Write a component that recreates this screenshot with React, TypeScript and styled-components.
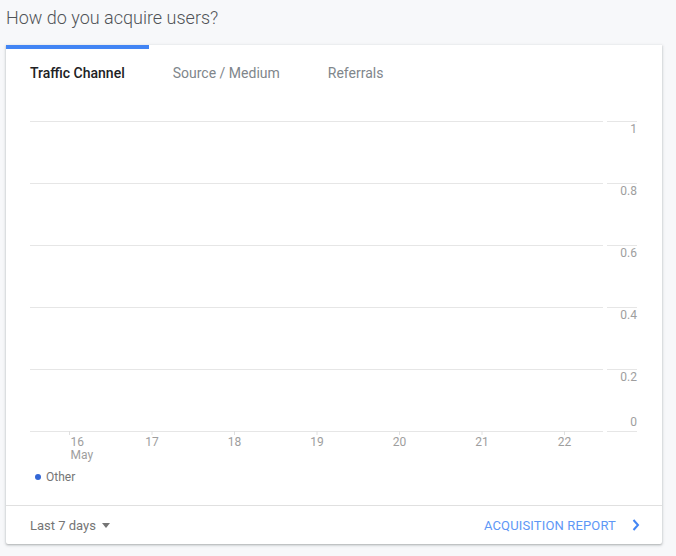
import React from "react";
import styled, { createGlobalStyle } from "styled-components";

const GlobalStyle = createGlobalStyle`
  html, body { margin: 0; padding: 0; background: #f7f8fa; }
  body { font-family: Roboto, "Noto Sans", Arial, sans-serif; }
  * { box-sizing: border-box; }
`;

const Page = styled.div`
  width: 676px;
  height: 556px;
  background: #f7f8fa;
  display: flex;
  flex-direction: column;
`;

const Title = styled.h2`
  margin: 0;
  height: 45px;
  padding: 7px 0 0 6px;
  font-size: 18px;
  line-height: 21px;
  font-weight: 300;
  color: #4f5357;
`;

const Card = styled.section`
  margin-left: 6px;
  width: 656px;
  height: 499px;
  background: #fff;
  border-radius: 0 0 2px 2px;
  box-shadow: 0 1px 2px rgba(60, 64, 67, 0.3), 0 1px 3px 1px rgba(60, 64, 67, 0.1);
  display: flex;
  flex-direction: column;
`;

const TabBar = styled.div`
  display: flex;
  height: 56px;
`;

const Tab = styled.div<{ $active?: boolean }>`
  display: flex;
  align-items: center;
  padding: 0 24px 4px;
  font-size: 14px;
  font-weight: ${(p) => (p.$active ? 500 : 400)};
  color: ${(p) => (p.$active ? "#202124" : "#80868b")};
  border-top: 4px solid ${(p) => (p.$active ? "#4285f4" : "transparent")};
  white-space: nowrap;
`;

const Chart = styled.svg`
  display: block;
  width: 656px;
  height: 364px;
  font-family: Roboto, Arial, sans-serif;
`;

const Legend = styled.div`
  height: 24px;
  display: flex;
  align-items: center;
  padding-left: 29px;
  gap: 5px;
  font-size: 12px;
  color: #757575;
`;

const Dot = styled.span`
  width: 6px;
  height: 6px;
  border-radius: 50%;
  background: #3367d6;
`;

const Spacer = styled.div`
  flex: 1;
`;

const Footer = styled.footer`
  height: 39px;
  border-top: 1px solid #e0e0e0;
  display: flex;
  align-items: center;
  justify-content: space-between;
  padding: 0 22px 0 24px;
`;

const RangeButton = styled.div`
  display: flex;
  align-items: center;
  gap: 6px;
  font-size: 13px;
  color: #757575;
`;

const Caret = styled.span`
  width: 0;
  height: 0;
  border-left: 4.5px solid transparent;
  border-right: 4.5px solid transparent;
  border-top: 5px solid #757575;
`;

const ReportLink = styled.div`
  display: flex;
  align-items: center;
  gap: 16px;
  font-size: 13px;
  letter-spacing: 0.15px;
  color: #5e97f6;
`;

const gridYs = [20, 82, 144, 206, 268, 330];
const yLabels = ["1", "0.8", "0.6", "0.4", "0.2"];
const days = ["16", "17", "18", "19", "20", "21", "22"];

export default function App() {
  return (
    <>
      <GlobalStyle />
      <Page>
        <Title>How do you acquire users?</Title>
        <Card>
          <TabBar>
            <Tab $active>Traffic Channel</Tab>
            <Tab>Source / Medium</Tab>
            <Tab>Referrals</Tab>
          </TabBar>
          <Chart viewBox="0 0 656 364">
            {gridYs.map((y) => (
              <g key={y}>
                <line x1={24} x2={597} y1={y + 0.5} y2={y + 0.5} stroke="#e6e6e6" strokeWidth={1} />
                <line x1={601} x2={631} y1={y + 0.5} y2={y + 0.5} stroke="#e6e6e6" strokeWidth={1} />
              </g>
            ))}
            {yLabels.map((l, i) => (
              <text key={l} x={631} y={gridYs[i] + 12} textAnchor="end" fontSize={12} fill="#9e9e9e">
                {l}
              </text>
            ))}
            <text x={631} y={325} textAnchor="end" fontSize={12} fill="#9e9e9e">
              0
            </text>
            {days.map((d, i) => {
              const x = 63.5 + i * 82.5;
              return (
                <g key={d}>
                  <line x1={x} x2={x} y1={330} y2={334} stroke="#e0e0e0" strokeWidth={1} />
                  <text
                    x={i === 0 ? x + 1 : x}
                    y={345}
                    textAnchor={i === 0 ? "start" : "middle"}
                    fontSize={12}
                    fill="#9e9e9e"
                  >
                    {d}
                  </text>
                </g>
              );
            })}
            <text x={64.5} y={357.5} fontSize={12} fill="#9e9e9e">
              May
            </text>
          </Chart>
          <Legend>
            <Dot />
            Other
          </Legend>
          <Spacer />
          <Footer>
            <RangeButton>
              Last 7 days
              <Caret />
            </RangeButton>
            <ReportLink>
              ACQUISITION REPORT
              <svg width="8" height="12" viewBox="0 0 8 12">
                <path d="M1.5 1 L6 6 L1.5 11" fill="none" stroke="#4285f4" strokeWidth="2" />
              </svg>
            </ReportLink>
          </Footer>
        </Card>
      </Page>
    </>
  );
}
